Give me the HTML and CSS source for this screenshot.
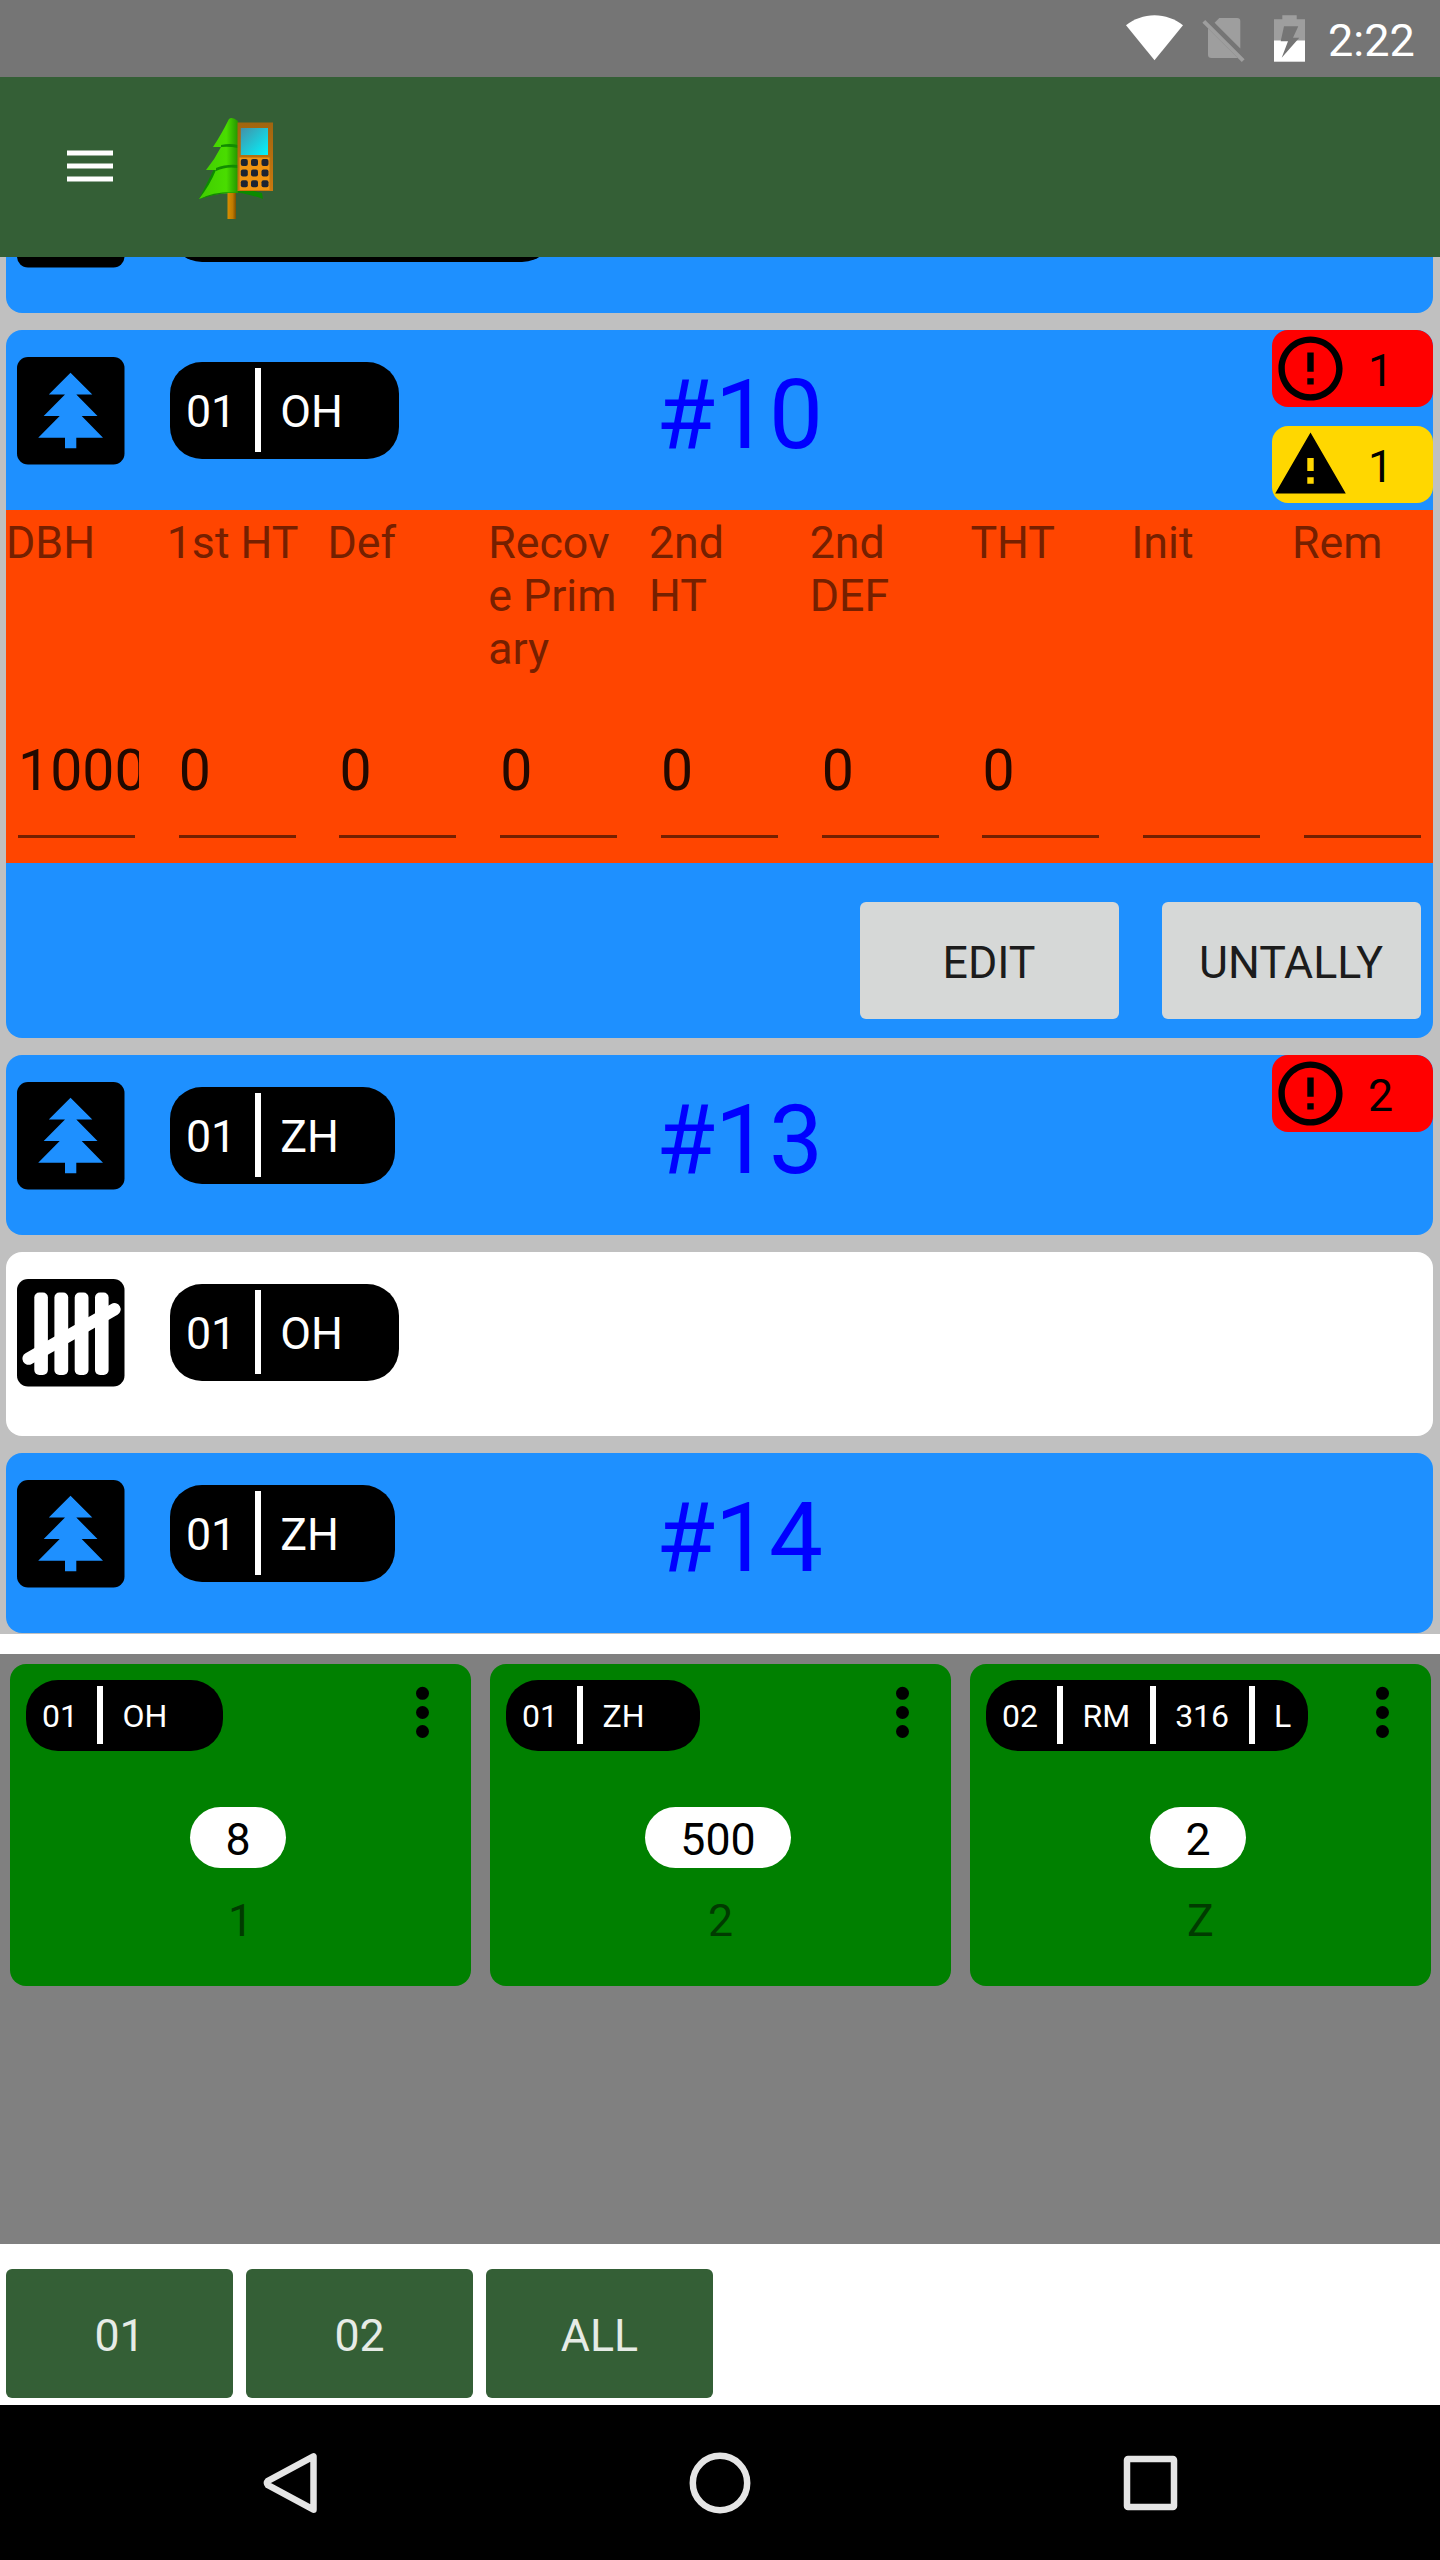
FILE: index.html
```html
<!DOCTYPE html>
<html lang="en">
<head>
<meta charset="utf-8">
<title>Tally</title>
<link rel="stylesheet" href="styles.css">
</head>
<body>
<svg class="defs" width="0" height="0" aria-hidden="true">
  <symbol id="tree" viewBox="0 0 108 108">
    <rect x="0" y="0" width="107.5" height="107.5" rx="11"/>
    <path fill="#1e90ff" d="M53.5 15.7 75.3 37.5H59.3L80.5 59H64.7L86 80.8H59.3V91.3H48V80.8H21.2L42.7 59H26.7L48 37.5H31.8z"/>
  </symbol>
  <symbol id="tally" viewBox="0 0 108 108">
    <rect x="0" y="0" width="107.5" height="107.5" rx="11"/>
    <g fill="#fff">
      <rect x="17.3" y="13.5" width="13.6" height="82.5" rx="5"/>
      <rect x="37.4" y="13.5" width="13.8" height="82.5" rx="5"/>
      <rect x="57.7" y="13.5" width="13.8" height="82.5" rx="5"/>
      <rect x="78" y="13.5" width="13.6" height="82.5" rx="5"/>
    </g>
    <path stroke="#fff" stroke-width="12.5" stroke-linecap="round" d="M11.6 79.6 97.4 30.3"/>
  </symbol>
  <symbol id="error" viewBox="0 0 24 24">
    <path d="M11 15h2v2h-2zm0-8h2v6h-2zm.99-5C6.47 2 2 6.48 2 12s4.47 10 9.99 10C17.52 22 22 17.52 22 12S17.52 2 11.99 2zM12 20c-4.42 0-8-3.58-8-8s3.58-8 8-8 8 3.58 8 8-3.58 8-8 8z"/>
  </symbol>
  <symbol id="warning" viewBox="0 0 24 24">
    <path d="M1 21h22L12 2 1 21zm12-3h-2v-2h2v2zm0-4h-2v-4h2v4z"/>
  </symbol>
  <symbol id="more" viewBox="0 0 14 52">
    <circle cx="6.5" cy="7.3" r="6.5"/><circle cx="6.5" cy="26.5" r="6.5"/><circle cx="6.5" cy="45.5" r="6.5"/>
  </symbol>
</svg>

<div class="screen">
  <header class="status">
    <svg class="status-icons" viewBox="0 0 190 77">
      <path fill="#fff" d="M6 25.3C14 19 24 15.3 34.5 15.3S55 19 63 25.3L34.5 60.3z"/>
      <g fill="#9e9e9e">
        <path d="M99.3 18H117a3.3 3.3 0 0 1 3.3 3.3V48.5L94.6 22.7z"/>
        <path d="M88 28.3 117.8 58H91.4A3.4 3.4 0 0 1 88 54.7z"/>
        <path d="M82.4 22.8 85.2 20 124.6 59.2 121.8 62z"/>
        <path d="M162.3 15.3H176.7V19.3H185V40.4H154V19.3H162.3z"/>
      </g>
      <path fill="#fff" d="M154 40.4h31V61.7h-31z"/>
      <path fill="#757575" d="M164 26.3H178.3L173 37.7H179.3L161.7 57.7 168 41.3H160.7z"/>
    </svg>
    <span class="clock">2:22</span>
  </header>

  <div class="appbar">
    <svg class="menu" viewBox="0 0 46 32"><path fill="#fff" d="M0 .6h46v5H0zM0 13.5h46v5H0zM0 26.4h46v5H0z"/></svg>
    <svg class="logo" viewBox="0 0 80 104">
      <defs>
        <linearGradient id="leaf" x1="0" y1="0" x2="1" y2="0"><stop offset="0" stop-color="#41cc00"/><stop offset=".7" stop-color="#49dd00"/><stop offset="1" stop-color="#259500"/></linearGradient>
        <linearGradient id="lcd" x1="0" y1="0" x2="1" y2="1"><stop offset="0" stop-color="#4391a8"/><stop offset="1" stop-color="#00f6ff"/></linearGradient>
        <linearGradient id="case" x1="0" y1="0" x2="0" y2="1"><stop offset="0" stop-color="#a0650f"/><stop offset="1" stop-color="#c9780f"/></linearGradient>
        <linearGradient id="trunk" x1="0" y1="0" x2="1" y2="0"><stop offset="0" stop-color="#d88f00"/><stop offset=".6" stop-color="#c07a00"/><stop offset="1" stop-color="#7b4e00"/></linearGradient>
      </defs>
      <path fill="#0b8a00" d="M1 82Q20 74 34 75T65 82L64 76 40 70 38 30 22 40z"/>
      <path fill="url(#leaf)" d="M31 2Q34 -1 40 4V76Q18 75 1 82 12 68 18 53L8 53Q17 42 23 30L15 30Q23 18 31 2z"/>
      <path fill="#128b00" d="M23 28Q32 26 40 28V31Q31 29 23 30zM18 51Q28 47 40 48V51Q28 49 18 54zM2 82Q15 74 40 75 20 76 2 82z"/>
      <path fill="url(#trunk)" d="M29.5 76h8.5v26h-8.5z"/>
      <path fill="url(#case)" d="M39.5 5.5h35.5v68.5H39.5z"/>
      <path fill="url(#lcd)" d="M42.8 11H70v27H42.8z"/>
      <path fill="#f09410" d="M41.5 40.5H71.5V73H41.5z"/>
      <g fill="#1d2432">
        <rect x="42.8" y="42" width="7" height="7" rx="2"/><rect x="53" y="42" width="7" height="7" rx="2"/><rect x="63.5" y="42" width="7" height="7" rx="2"/>
        <rect x="42.8" y="52.5" width="7" height="7" rx="2"/><rect x="53" y="52.5" width="7" height="7" rx="2"/><rect x="63.5" y="52.5" width="7" height="7" rx="2"/>
        <rect x="42.8" y="63.2" width="7" height="7" rx="2"/><rect x="53" y="63.2" width="7" height="7" rx="2"/><rect x="63.5" y="63.2" width="7" height="7" rx="2"/>
      </g>
    </svg>
  </div>

  <main class="list">
    <article class="card card-scrolled">
      <div class="head">
        <svg class="tile"><use href="#tree"/></svg>
        <div class="pill pill-wide"></div>
      </div>
    </article>

    <article class="card">
      <div class="head">
        <svg class="tile"><use href="#tree"/></svg>
        <div class="pill open"><span>01</span><i></i><span>OH</span></div>
        <h2 class="number">#10</h2>
        <div class="badges">
          <div class="badge error"><svg><use href="#error"/></svg><span>1</span></div>
          <div class="badge warning"><svg><use href="#warning"/></svg><span>1</span></div>
        </div>
      </div>
      <div class="fields">
        <div class="field"><label>DBH</label><div class="value">1000</div></div>
        <div class="field"><label>1st HT</label><div class="value">0</div></div>
        <div class="field"><label>Def</label><div class="value">0</div></div>
        <div class="field"><label>Recov<br>e Prim<br>ary</label><div class="value">0</div></div>
        <div class="field"><label>2nd HT</label><div class="value">0</div></div>
        <div class="field"><label>2nd DEF</label><div class="value">0</div></div>
        <div class="field"><label>THT</label><div class="value">0</div></div>
        <div class="field"><label>Init</label><div class="value"></div></div>
        <div class="field"><label>Rem</label><div class="value"></div></div>
      </div>
      <div class="actions">
        <button class="action">EDIT</button>
        <button class="action">UNTALLY</button>
      </div>
    </article>

    <article class="card">
      <div class="head">
        <svg class="tile"><use href="#tree"/></svg>
        <div class="pill open"><span>01</span><i></i><span>ZH</span></div>
        <h2 class="number">#13</h2>
        <div class="badges">
          <div class="badge error"><svg><use href="#error"/></svg><span>2</span></div>
        </div>
      </div>
    </article>

    <article class="card plain">
      <div class="head">
        <svg class="tile"><use href="#tally"/></svg>
        <div class="pill open"><span>01</span><i></i><span>OH</span></div>
      </div>
    </article>

    <article class="card">
      <div class="head">
        <svg class="tile"><use href="#tree"/></svg>
        <div class="pill open"><span>01</span><i></i><span>ZH</span></div>
        <h2 class="number">#14</h2>
      </div>
    </article>
  </main>

  <section class="counters">
    <article class="counter">
      <div class="counter-head">
        <div class="pill small open"><span>01</span><i></i><span>OH</span></div>
        <svg class="more"><use href="#more"/></svg>
      </div>
      <div class="count">8</div>
      <div class="hotkey">1</div>
    </article>
    <article class="counter">
      <div class="counter-head">
        <div class="pill small open"><span>01</span><i></i><span>ZH</span></div>
        <svg class="more"><use href="#more"/></svg>
      </div>
      <div class="count">500</div>
      <div class="hotkey">2</div>
    </article>
    <article class="counter">
      <div class="counter-head">
        <div class="pill small"><span>02</span><i></i><span>RM</span><i></i><span>316</span><i></i><span>L</span></div>
        <svg class="more"><use href="#more"/></svg>
      </div>
      <div class="count">2</div>
      <div class="hotkey">Z</div>
    </article>
  </section>

  <div class="strata">
    <button class="stratum">01</button>
    <button class="stratum">02</button>
    <button class="stratum">ALL</button>
  </div>

  <nav class="navbar">
    <svg viewBox="0 0 64 64"><path d="M55.5 5.3V58.7L10 34.2Q8 32 10 29.8z"/></svg>
    <svg viewBox="0 0 64 64"><circle cx="32" cy="32" r="27.2"/></svg>
    <svg viewBox="0 0 64 64"><rect x="9" y="8" width="47" height="48" rx="1"/></svg>
  </nav>
</div>
</body>
</html>
```
FILE: styles.css
```css
* { box-sizing: border-box; }

body {
  margin: 0;
  font-family: Roboto, "Liberation Sans", sans-serif;
  font-size: 44.7px;
  line-height: 53px;
  color: #000;
  background: #fff;
}

svg { display: block; flex: none; }
.defs { position: absolute; }
button { font: inherit; border: 0; padding: 0; }

.screen {
  width: 1440px;
  height: 2560px;
  display: flex;
  flex-direction: column;
  overflow: hidden;
}

/* status bar */
.status {
  height: 77px;
  flex: none;
  display: flex;
  align-items: center;
  justify-content: flex-end;
  padding-right: 24px;
  background: #757575;
  color: #fff;
}
.status-icons { width: 190px; height: 77px; margin-right: 18px; }
.clock { width: 88px; padding-top: 3px; font-size: 45px; white-space: nowrap; }

/* app bar */
.appbar {
  height: 180px;
  flex: none;
  display: flex;
  align-items: center;
  padding-left: 67px;
  gap: 85px;
  background: #345f36;
}
.menu { width: 46px; height: 32px; margin-top: -2px; }
.logo { width: 80px; height: 104px; margin-top: 3px; }

/* tree list */
.list {
  height: 1377px;
  flex: none;
  display: flex;
  flex-direction: column;
  gap: 17px;
  padding: 0 7px 0 6px;
  overflow: hidden;
  background: #c0c0c0;
}
.card {
  flex: none;
  border-radius: 16px;
  overflow: hidden;
  background: #1e90ff;
}
.card-scrolled { margin-top: -124px; }
.card.plain { height: 184px; background: #fff; }
.head {
  height: 180px;
  display: grid;
  grid-template-columns: 108px 487px 1fr 161px;
  column-gap: 45px;
  padding-left: 11px;
  align-items: start;
}
.tile { width: 108px; height: 108px; margin-top: 27px; }

.pill {
  width: max-content;
  height: 97px;
  margin-top: 32px;
  display: flex;
  align-items: center;
  gap: 19px;
  padding: 3px 16px 0;
  border-radius: 32px;
  background: #000;
  color: #fff;
}
.pill.open { padding-right: 56px; }
.pill-wide { width: 384px; }
.pill i { width: 6px; height: 84px; margin-top: -4px; background: #fff; }
.pill.small { height: 71px; margin: 0; padding-top: 1px; font-size: 32px; line-height: 38px; }
.pill.small.open { padding-right: 55px; }
.pill.small i { height: 58px; margin-top: -2px; }
.pill.small i + span { padding: 0 .5px; }
.head .pill { grid-column: 2; }

.number {
  grid-column: 3;
  margin: 29px 0 0 -46px;
  font-size: 96px;
  line-height: 113px;
  font-weight: 400;
  color: #00f;
}
.badges {
  grid-column: 4;
  display: flex;
  flex-direction: column;
  gap: 19px;
}
.badge {
  height: 77px;
  display: flex;
  align-items: center;
  gap: 19px;
  border-radius: 16px;
}
.badge svg { width: 77px; height: 77px; }
.badge span { padding-top: 5px; }
.badge.error { background: #f00; }
.badge.warning { background: #ffd700; }

.fields {
  height: 353px;
  display: grid;
  grid-template-columns: repeat(9, 1fr);
  column-gap: 19.7px;
  padding: 7px 0 25px;
  background: #ff4500;
}
.field {
  min-width: 0;
  display: flex;
  flex-direction: column;
  justify-content: space-between;
}
.field label { color: #752000; }
.value {
  height: 101px;
  margin: 0 8px 0 12px;
  font-size: 57.2px;
  line-height: 68px;
  color: #210900;
  overflow: hidden;
  background: linear-gradient(#752000, #752000) left bottom / 117px 3.5px no-repeat;
}

.actions {
  height: 175px;
  display: flex;
  justify-content: flex-end;
  gap: 43px;
  padding: 39px 12px 0;
}
.action {
  width: 259px;
  height: 117px;
  padding: 6px 1px 0 0;
  border-radius: 6px;
  background: #d6d8d7;
  color: #1c1c1c;
}

/* counters */
.counters {
  height: 590px;
  flex: none;
  margin-top: 20px;
  padding: 10px 9px 0 10px;
  display: grid;
  grid-template-columns: repeat(3, 461px);
  gap: 19px;
  align-items: start;
  background: #808080;
}
.counter {
  height: 322px;
  padding: 16px;
  display: flex;
  flex-direction: column;
  align-items: center;
  border-radius: 16px;
  background: #008000;
}
.counter-head {
  align-self: stretch;
  display: flex;
  justify-content: space-between;
  align-items: flex-start;
}
.more { width: 14px; height: 52px; margin: 6px 25px 0 0; }
.count {
  height: 61px;
  margin: 56px 5px 0 0;
  padding: 7px 35.4px 0;
  border-radius: 31px;
  background: #fff;
}
.hotkey { margin-top: 27px; color: #003b00; }

/* strata filter */
.strata {
  height: 161px;
  flex: none;
  display: flex;
  gap: 13px;
  padding: 25px 6px 0;
  background: #fff;
}
.stratum {
  width: 227px;
  height: 129px;
  padding: 6px 0 0;
  border-radius: 6px;
  background: #345f36;
  color: #e6ebe6;
}

/* system navigation */
.navbar {
  flex: 1;
  display: flex;
  justify-content: space-between;
  align-items: center;
  padding: 0 258px;
  background: #000;
}
.navbar svg {
  width: 64px;
  height: 64px;
  fill: none;
  stroke: #e5e5e5;
  stroke-width: 6.5;
  stroke-linejoin: round;
}
```
